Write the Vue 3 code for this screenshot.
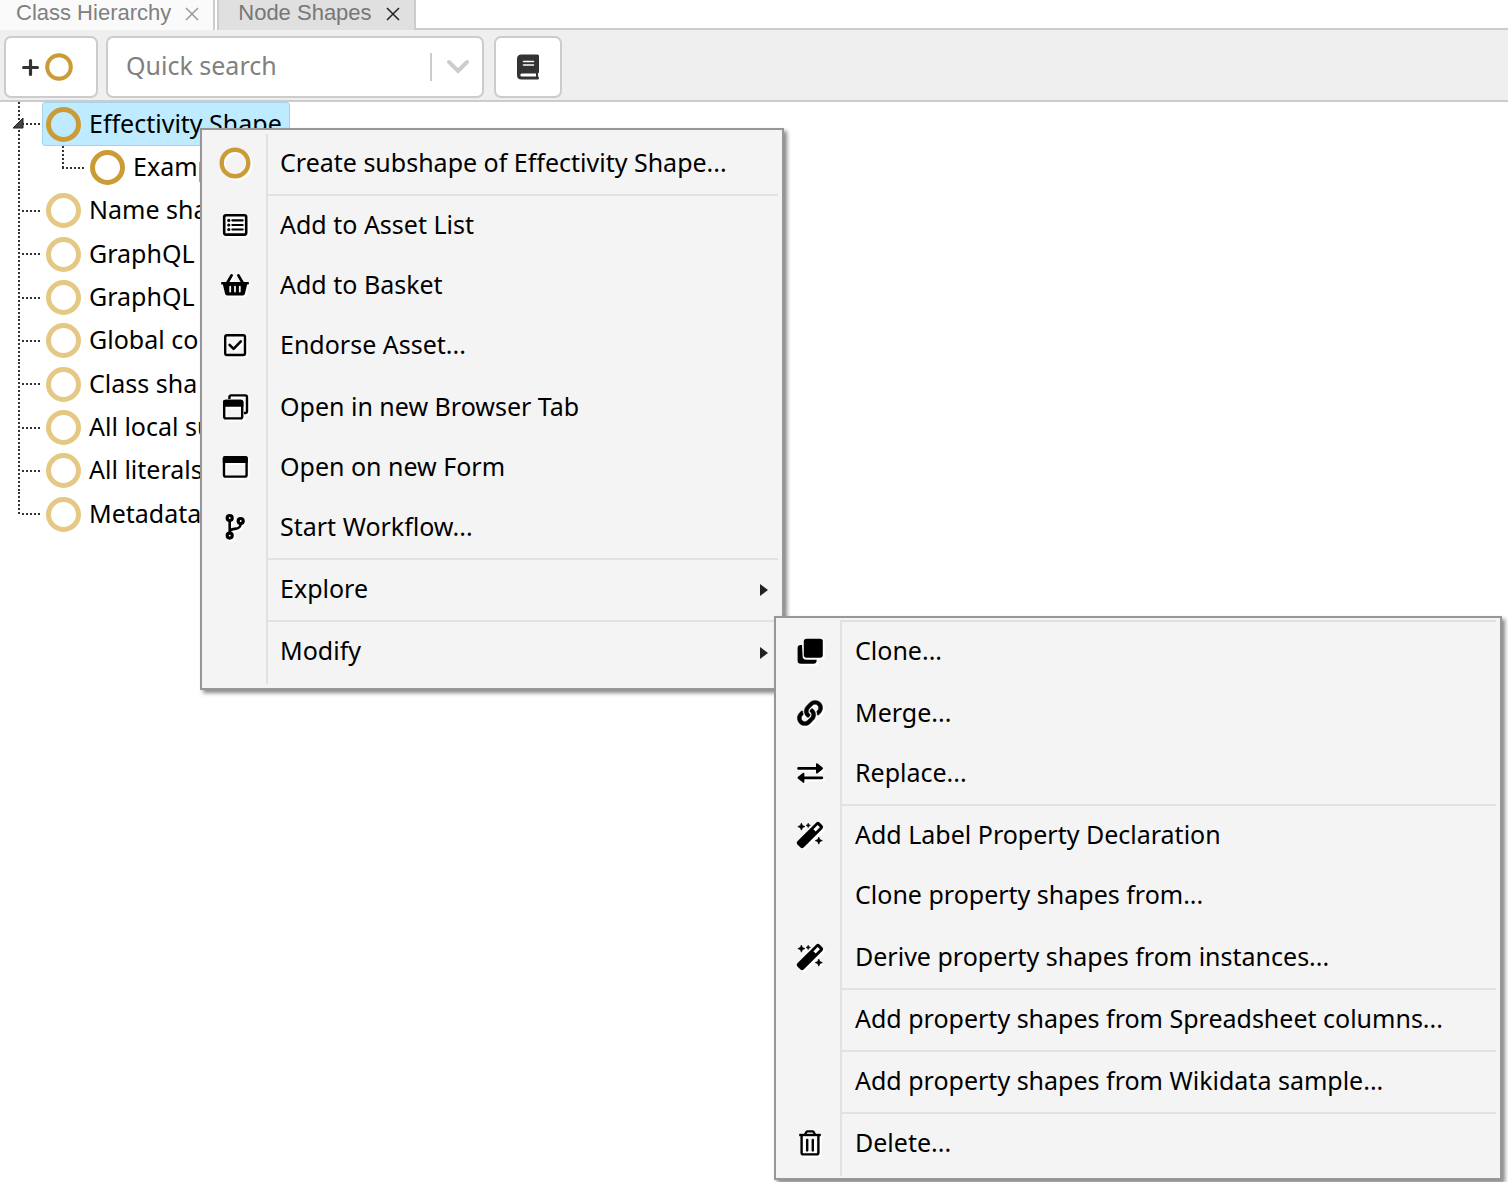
<script setup>
import { ref } from 'vue'

const query = ref('')

const roots = [
  { label: 'Effectivity Shape', own: true, selected: true, children: [{ label: 'Examp' }] },
  { label: 'Name sha' },
  { label: 'GraphQL' },
  { label: 'GraphQL' },
  { label: 'Global co' },
  { label: 'Class sha' },
  { label: 'All local su' },
  { label: 'All literals' },
  { label: 'Metadata' },
]

const icons = {
  ring: '<circle cx="16" cy="16" r="13.3" fill="none" stroke="#cb9c36" stroke-width="4.4"/>',
  list: '<rect x="5.2" y="6.2" width="22" height="19.4" rx="1.8" fill="none" stroke="currentColor" stroke-width="2.6"/><path d="M13.4 11.4h10.2M13.4 16h10.2M13.4 20.5h10.2" stroke="currentColor" stroke-width="2.2" stroke-linecap="round"/><circle cx="9.8" cy="11.4" r="1.6"/><circle cx="9.8" cy="16" r="1.6"/><circle cx="9.8" cy="20.5" r="1.6"/>',
  basket: '<path d="M2.2 13h27.6v2.6h-1.7l-2.2 9.2q-.4 1.700-2.200 1.700H8.300q-1.800 0-2.200-1.700L3.900 15.600H2.200z"/><path d="M8.200 14 12.600 6.400M23.800 14 19.400 6.400" stroke="currentColor" stroke-width="2.800" stroke-linecap="round"/><path d="M11.200 17.600v5M16 17.600v5M20.800 17.600v5" stroke="#f4f4f4" stroke-width="1.800" stroke-linecap="round"/>',
  check: '<rect x="6.200" y="6.200" width="19.800" height="19.800" rx="1.800" fill="none" stroke="currentColor" stroke-width="2.400"/><path d="m10.600 15.800 4 4 7.200-7.400" fill="none" stroke="currentColor" stroke-width="2.600" stroke-linecap="round" stroke-linejoin="round"/>',
  windows: '<path d="M10.400 8V6.200q0-1.800 1.800-1.800h14q1.800 0 1.800 1.800v14q0 1.800-1.800 1.800H25" fill="none" stroke="currentColor" stroke-width="2.400"/><rect x="5.200" y="10" width="18" height="17.400" rx="1.600" fill="none" stroke="currentColor" stroke-width="2.400"/><path d="M4 15.800V11q0-2.200 2.200-2.200h16q2.200 0 2.200 2.200v4.800z"/>',
  window: '<rect x="5" y="6.200" width="22.600" height="19.400" rx="1.600" fill="none" stroke="currentColor" stroke-width="2.400"/><path d="M3.800 12V7.200Q3.800 5 6 5h20.600q2.200 0 2.200 2.200V12z"/>',
  branch: '<g fill="none" stroke="currentColor"><g stroke-width="3.200"><circle cx="10.700" cy="7" r="2.500"/><circle cx="21.700" cy="10" r="2.500"/><circle cx="10.700" cy="24.600" r="2.500"/></g><path d="M10.700 9.500V22M21.700 12.500c0 4.500-3 5-6 5.400-3 .4-5 1-5 3" stroke-width="2.600"/></g>',
  clone: '<path d="M8 10H6.800Q3.600 10 3.600 13v12.600q0 3.200 3.200 3.200h12.600q3.200 0 3.200-3.200V24.800H12.400Q8.600 24.800 8.600 21z"/><rect x="9.800" y="3.800" width="19" height="19" rx="2.800"/>',
  link: '<path transform="translate(3.400 3.400) scale(.0492)" stroke="currentColor" stroke-width="8" d="M326.612 185.391c59.747 59.809 58.927 155.698.36 214.59-.11.12-.24.25-.36.37l-67.200 67.200c-59.270 59.270-155.699 59.262-214.960 0-59.270-59.260-59.270-155.700 0-214.960l37.106-37.106c9.840-9.840 26.786-3.300 27.294 10.606.648 17.722 3.826 35.527 9.690 52.721 1.986 5.822.567 12.262-3.783 16.612l-13.087 13.087c-28.026 28.026-28.905 73.660-1.155 101.960 28.024 28.579 74.086 28.749 102.325.510l67.200-67.190c28.191-28.191 28.073-73.757 0-101.830-3.701-3.694-7.429-6.564-10.341-8.569a16.037 16.037 0 0 1-6.947-12.606c-.396-10.567 3.348-21.456 11.698-29.806l21.054-21.055c5.521-5.521 14.182-6.199 20.584-1.731a152.482 152.482 0 0 1 20.522 17.197zM467.547 44.449c-59.261-59.262-155.690-59.270-214.960 0l-67.200 67.200c-.120.120-.250.250-.360.370-58.566 58.892-59.387 154.781.360 214.590a152.454 152.454 0 0 0 20.521 17.196c6.402 4.468 15.064 3.789 20.584-1.731l21.054-21.055c8.350-8.350 12.094-19.239 11.698-29.806a16.037 16.037 0 0 0-6.947-12.606c-2.912-2.005-6.640-4.875-10.341-8.569-28.073-28.073-28.191-73.639 0-101.830l67.200-67.190c28.239-28.239 74.300-28.069 102.325.510 27.750 28.300 26.872 73.934-1.155 101.960l-13.087 13.087c-4.350 4.350-5.769 10.790-3.783 16.612 5.864 17.194 9.042 34.999 9.690 52.721.509 13.906 17.454 20.446 27.294 10.606l37.106-37.106c59.271-59.259 59.271-155.699.001-214.959z"/>',
  swap: '<path d="M4.600 11.400h18M27.800 20.800H10" stroke="currentColor" stroke-width="2.800" stroke-linecap="round"/><path d="M22 7.400q0-1.800 1.600-.8l5 4q.8.800 0 1.600l-5 4q-1.600 1-1.600-.8zM10.400 16.800q0-1.800-1.600-.8l-5 4q-.8.800 0 1.600l5 4q1.600 1 1.600-.8z"/>',
  wand: '<g transform="rotate(-45 16 16)"><path fill-rule="evenodd" d="M2.600 11.600H29q2.600 0 2.600 2.600v3.600q0 2.600-2.600 2.600H2.600Q.4 20.400.4 18.200v-4.400Q.4 11.600 2.600 11.600zm19.800 2.800v3.200h6v-3.200z"/></g><path d="m7.400 4 1.100 2.500L11 7.600 8.500 8.700 7.400 11.200 6.300 8.700 3.800 7.600 6.300 6.500zM14.200 4.200l.7 1.500 1.500.7-1.500.7-.7 1.500-.7-1.500-1.500-.7 1.500-.7zM24.800 18l1.100 2.500 2.500 1.100-2.500 1.100-1.100 2.500-1.100-2.500-2.500-1.100 2.500-1.100z" stroke="currentColor" stroke-width=".6"/>',
  trash: '<path d="M5.200 8h21.600" stroke="currentColor" stroke-width="2.400"/><path d="M11 7.600 12.400 5q.4-.6 1.200-.6h4.800q.8 0 1.200.6L21 7.600M7.600 8.400v17q0 2 2 2h12.800q2 0 2-2v-17" fill="none" stroke="currentColor" stroke-width="2.400"/><path d="M13.200 13v10.400M18.800 13v10.400" stroke="currentColor" stroke-width="2.400" stroke-linecap="round"/>',
}

const menu = [
  { label: 'Create subshape of Effectivity Shape...', icon: 'ring' },
  { label: 'Add to Asset List', icon: 'list', divided: true },
  { label: 'Add to Basket', icon: 'basket' },
  { label: 'Endorse Asset...', icon: 'check' },
  { label: 'Open in new Browser Tab', icon: 'windows', spaced: true },
  { label: 'Open on new Form', icon: 'window' },
  { label: 'Start Workflow...', icon: 'branch' },
  { label: 'Explore', divided: true, arrow: true },
  {
    label: 'Modify',
    divided: true,
    arrow: true,
    last: true,
    children: [
      { label: 'Clone...', icon: 'clone', divided: true },
      { label: 'Merge...', icon: 'link', spaced: true },
      { label: 'Replace...', icon: 'swap' },
      { label: 'Add Label Property Declaration', icon: 'wand', divided: true },
      { label: 'Clone property shapes from...' },
      { label: 'Derive property shapes from instances...', icon: 'wand', spaced: true },
      { label: 'Add property shapes from Spreadsheet columns...', divided: true },
      { label: 'Add property shapes from Wikidata sample...', divided: true },
      { label: 'Delete...', icon: 'trash', divided: true, last: true },
    ],
  },
]
</script>

<template>
  <main class="panel">
    <nav class="tabs">
      <div class="tab">
        <button class="tab-name" type="button">Class Hierarchy</button>
        <button class="tab-close" type="button" aria-label="Close Class Hierarchy">
          <svg viewBox="0 0 14 14"><path d="M1 1l12 12M13 1 1 13" /></svg>
        </button>
      </div>
      <div class="tab active">
        <button class="tab-name" type="button">Node Shapes</button>
        <button class="tab-close" type="button" aria-label="Close Node Shapes">
          <svg viewBox="0 0 14 14"><path d="M1 1l12 12M13 1 1 13" /></svg>
        </button>
      </div>
      <div class="tabs-rest"></div>
    </nav>

    <div class="toolbar">
      <button class="tool create" type="button" aria-label="Create shape">
        <svg class="plus" viewBox="0 0 16 16"><path d="M8 1.500v13M1.500 8h13" /></svg>
        <svg class="create-ring" viewBox="0 0 28 28"><circle cx="14" cy="14" r="11.800" /></svg>
      </button>
      <div class="search">
        <input v-model="query" type="text" placeholder="Quick search" aria-label="Quick search" />
        <button class="search-toggle" type="button" aria-label="Show options">
          <svg viewBox="0 0 24 16"><path d="M3 3l9 9 9-9" /></svg>
        </button>
      </div>
      <button class="tool book" type="button" aria-label="Documentation">
        <svg viewBox="0 0 24 26">
          <path d="M5.500.5h16q1.500 0 1.500 1.500v16q0 1-1 1.400v3.200q1 .3 1 1.400t-1 1.500H5.500Q1 25.500 1 21V5Q1 .5 5.500.5z" fill="#333" />
          <path d="M7.500 7.500h10M7.500 11h10" stroke="#fff" stroke-width="1.600" stroke-linecap="round" />
          <path d="M5.800 19.500H20v3H5.800q-1.500 0-1.500-1.500t1.500-1.500z" fill="#fff" />
        </svg>
      </button>
    </div>

    <ul class="tree" role="tree">
      <li v-for="(node, i) in roots" :key="i" role="treeitem">
        <div class="row">
          <span class="lines root">
            <svg v-if="node.children" class="toggle" viewBox="0 0 12 12"><path d="M11 1v10H1z" /></svg>
          </span>
          <span class="node" :class="{ selected: node.selected }">
            <span class="ring" :class="{ faded: !node.own }"></span>
            <span class="name">{{ node.label }}</span>
          </span>
        </div>
        <ul v-if="node.children" role="group">
          <li v-for="child in node.children" :key="child.label" class="row" role="treeitem">
            <span class="lines nested"></span>
            <span class="node">
              <span class="ring"></span>
              <span class="name">{{ child.label }}</span>
            </span>
          </li>
        </ul>
      </li>
    </ul>

    <ul class="menu context" role="menu">
      <li v-for="item in menu" :key="item.label" :class="{ divided: item.divided }" role="none">
        <button class="item" :class="{ spaced: item.spaced, last: item.last }" type="button" role="menuitem">
          <span class="icon">
            <svg v-if="item.icon" viewBox="0 0 32 32" v-html="icons[item.icon]"></svg>
          </span>
          <span class="label">{{ item.label }}</span>
          <svg v-if="item.arrow" class="arrow" viewBox="0 0 8 12"><path d="M0 0l8 6-8 6z" /></svg>
        </button>
        <ul v-if="item.children" class="menu submenu" role="menu">
          <li v-for="sub in item.children" :key="sub.label" :class="{ divided: sub.divided }" role="none">
            <button class="item" :class="{ spaced: sub.spaced, last: sub.last }" type="button" role="menuitem">
              <span class="icon">
                <svg v-if="sub.icon" viewBox="0 0 32 32" v-html="icons[sub.icon]"></svg>
              </span>
              <span class="label">{{ sub.label }}</span>
            </button>
          </li>
        </ul>
      </li>
    </ul>
  </main>
</template>

<style>
body {
  margin: 0;
  background: #fff;
}
</style>

<style scoped>
* {
  box-sizing: border-box;
}

.panel {
  position: relative;
  min-height: 100vh;
  overflow: hidden;
  font: 25px/32px 'Noto Sans', sans-serif;
  color: #000;
}

ul {
  margin: 0;
  padding: 0;
  list-style: none;
}

button {
  margin: 0;
  padding: 0;
  border: 0;
  background: none;
  color: inherit;
  font: inherit;
  text-align: left;
}

svg {
  display: block;
  flex: none;
}

/* tabs */
.tabs {
  display: flex;
  height: 30px;
}

.tab {
  display: flex;
  align-items: flex-start;
  gap: 14px;
  padding: 0 14px 0 16px;
  border-right: 2px solid #ccc;
  background: #fafafa;
  color: #808080;
  font: 22px/26px 'Liberation Sans', Arial, sans-serif;
}

.tab.active {
  margin-left: 2px;
  padding-left: 19px;
  border-left: 2px solid #ccc;
  background: #e0e0e0;
  color: #777;
}

.tab-close {
  padding-top: 7px;
}

.tab-close svg {
  width: 14px;
  height: 14px;
  fill: none;
  stroke: #999;
  stroke-width: 1.5;
}

.active .tab-close svg {
  stroke: #222;
}

.tabs-rest {
  flex: 1;
  border-bottom: 2px solid #ccc;
}

/* toolbar */
.toolbar {
  display: flex;
  align-items: center;
  padding: 6px 4px 2px;
  border-bottom: 2px solid #ccc;
  background: #efefef;
}

.tool,
.search {
  display: flex;
  align-items: center;
  height: 62px;
  border: 2px solid #ccc;
  border-radius: 7px;
  background: #fff;
}

.create {
  gap: 6px;
  width: 94px;
  padding-left: 16px;
}

.plus {
  width: 17px;
  height: 17px;
  fill: none;
  stroke: #333;
  stroke-width: 3;
  stroke-linecap: round;
}

.create-ring {
  width: 28px;
  height: 28px;
  fill: none;
  stroke: #cb9c36;
  stroke-width: 4;
}

.search {
  width: 378px;
  margin: 0 10px 0 8px;
}

.search input {
  flex: 1;
  min-width: 0;
  height: 58px;
  padding: 0 0 4px 18px;
  border: 0;
  outline: 0;
  background: none;
  color: #333;
  font: inherit;
}

.search input::placeholder {
  color: #808080;
  opacity: 1;
}

.search-toggle {
  height: 28px;
  padding: 0 12px 0 14px;
  border-left: 2px solid #ccc;
}

.search-toggle svg {
  width: 24px;
  height: 16px;
  fill: none;
  stroke: #ccc;
  stroke-width: 4;
  stroke-linecap: round;
}

.book {
  justify-content: center;
  width: 68px;
}

.book svg {
  width: 24px;
  height: 26px;
}

/* tree */
.row {
  display: flex;
  height: 43px;
  white-space: nowrap;
}

.tree > li:first-child > .row,
.tree > li:nth-child(3n) > .row {
  height: 44px;
}

.lines {
  --down: repeating-linear-gradient(#333 0 2px, transparent 2px 4px);
  --across: repeating-linear-gradient(90deg, #333 0 2px, transparent 2px 4px);
  display: flex;
  flex: none;
  align-items: center;
  background-repeat: no-repeat;
}

.lines.root {
  width: 42px;
  padding: 0 0 3px 12px;
  background-image: var(--down), var(--across);
  background-position: 18px 0, 22px 21px;
  background-size: 2px 100%, 20px 2px;
}

li:last-child > .row > .root {
  background-size: 2px 23px, 20px 2px;
}

.lines.nested {
  width: 86px;
  background-image: var(--down), var(--down), var(--across);
  background-position: 18px 0, 62px 0, 62px 21px;
  background-size: 2px 100%, 2px 21px, 22px 2px;
}

.toggle {
  width: 12px;
  height: 12px;
  fill: #444;
  stroke: #222;
}

.node {
  display: flex;
  align-items: center;
  gap: 8px;
  padding: 0 7px 0 3px;
  border: 1px solid transparent;
  border-radius: 3px;
}

.node.selected {
  border-color: #a6d3e6;
  background: #beebff;
}

.name {
  padding-bottom: 3px;
}

.ring {
  width: 35px;
  height: 35px;
  border: 5px solid #cb9c36;
  border-radius: 50%;
}

.ring.faded {
  border-color: #e4c883;
}

/* menus */
.menu {
  position: absolute;
  border: 2px solid #979797;
  background: #f4f4f4;
  box-shadow: 3px 3px 4px #888;
  text-shadow: 2px 2px #fff;
}

.context {
  top: 128px;
  left: 200px;
  width: 584px;
  padding: 4px 0;
}

.submenu {
  top: -4px;
  left: calc(100% - 8px);
  width: 728px;
  padding: 2px 0;
}

.menu li {
  position: relative;
}

.divided {
  padding-top: 2px;
  background: linear-gradient(#e1e1e1, #e1e1e1) 64px 0 / calc(100% - 68px) 2px no-repeat;
}

.item {
  display: flex;
  align-items: stretch;
  width: 100%;
  height: 60px;
}

.item.spaced,
.item.last {
  height: 62px;
}

.icon {
  flex: none;
  width: 64px;
  padding: 13px 0 0 17px;
}

.submenu .icon {
  padding-left: 18px;
}

.icon svg {
  width: 32px;
  height: 32px;
  fill: currentColor;
  filter: drop-shadow(2px 2px 0 #fff);
}

.label {
  flex: 1;
  padding: 12px 0 0 12px;
  border-left: 2px solid #e1e1e1;
  white-space: nowrap;
}

.submenu .label {
  padding-left: 13px;
}

.spaced .icon {
  padding-top: 15px;
}

.spaced .label {
  padding-top: 14px;
}

.arrow {
  align-self: center;
  width: 8px;
  height: 12px;
  margin-right: 14px;
  fill: #222;
}
</style>
